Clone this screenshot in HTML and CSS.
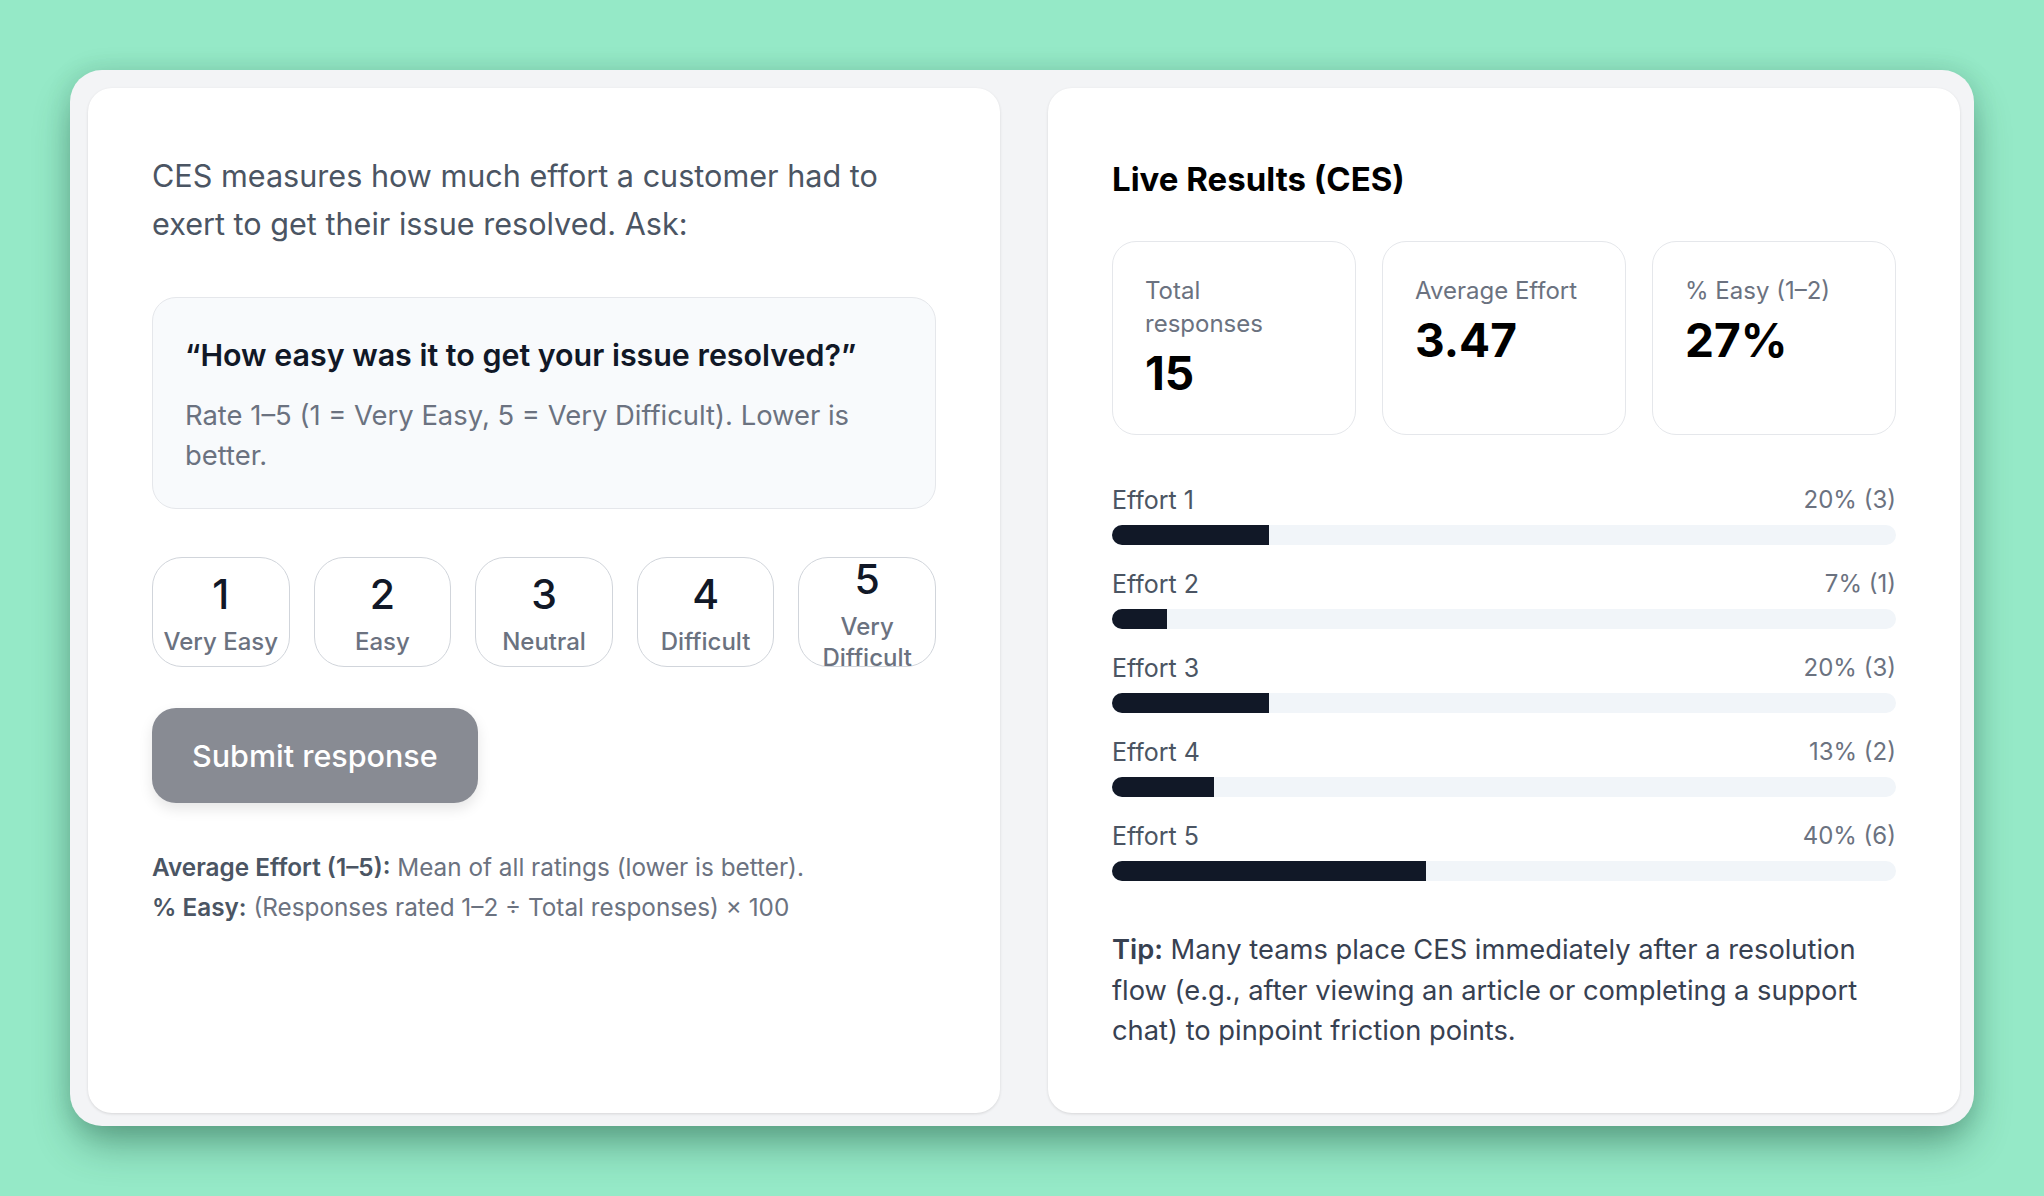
FILE: index.html
```html
<!DOCTYPE html>
<html lang="en">
<head>
  <meta charset="UTF-8" />
  <meta name="viewport" content="width=device-width, initial-scale=1.0" />
  <title>Customer Effort Score</title>
  <link rel="stylesheet" href="styles.css">
</head>
<body>
  <div class="frame">
    <!-- Survey side -->
    <section class="card">
      <p class="intro">CES measures how much effort a customer had to exert to get their issue resolved. Ask:</p>
      <div class="question">
        <div class="question-text">“How easy was it to get your issue resolved?”</div>
        <div class="question-hint">Rate 1–5 (1 = Very Easy, 5 = Very Difficult). Lower is better.</div>
      </div>
      <div class="scale">
        <button class="scale-btn"><span class="num">1</span><span class="lbl">Very Easy</span></button>
        <button class="scale-btn"><span class="num">2</span><span class="lbl">Easy</span></button>
        <button class="scale-btn"><span class="num">3</span><span class="lbl">Neutral</span></button>
        <button class="scale-btn"><span class="num">4</span><span class="lbl">Difficult</span></button>
        <button class="scale-btn"><span class="num">5</span><span class="lbl">Very Difficult</span></button>
      </div>
      <button class="submit" disabled>Submit response</button>
      <div class="notes">
        <p><strong>Average Effort (1–5):</strong> Mean of all ratings (lower is better).</p>
        <p><strong>% Easy:</strong> (Responses rated 1–2 ÷ Total responses) × 100</p>
      </div>
    </section>

    <!-- Results side -->
    <section class="card">
      <h2 class="title">Live Results (CES)</h2>
      <div class="stats">
        <div class="stat">
          <div class="stat-label">Total responses</div>
          <div class="stat-value">15</div>
        </div>
        <div class="stat">
          <div class="stat-label">Average Effort</div>
          <div class="stat-value">3.47</div>
        </div>
        <div class="stat">
          <div class="stat-label">% Easy (1–2)</div>
          <div class="stat-value">27%</div>
        </div>
      </div>
      <div class="dist">
        <div class="row">
          <div class="row-head"><span>Effort 1</span><span class="pct">20% (3)</span></div>
          <div class="track"><div class="fill" style="width: 20%"></div></div>
        </div>
        <div class="row">
          <div class="row-head"><span>Effort 2</span><span class="pct">7% (1)</span></div>
          <div class="track"><div class="fill" style="width: 7%"></div></div>
        </div>
        <div class="row">
          <div class="row-head"><span>Effort 3</span><span class="pct">20% (3)</span></div>
          <div class="track"><div class="fill" style="width: 20%"></div></div>
        </div>
        <div class="row">
          <div class="row-head"><span>Effort 4</span><span class="pct">13% (2)</span></div>
          <div class="track"><div class="fill" style="width: 13%"></div></div>
        </div>
        <div class="row">
          <div class="row-head"><span>Effort 5</span><span class="pct">40% (6)</span></div>
          <div class="track"><div class="fill" style="width: 40%"></div></div>
        </div>
      </div>
      <p class="tip"><strong>Tip:</strong> Many teams place CES immediately after a resolution flow (e.g., after viewing an article or completing a support chat) to pinpoint friction points.</p>
    </section>
  </div>
</body>
</html>
```

FILE: styles.css
```css
* {
  box-sizing: border-box;
}
body {
  margin: 0;
  padding: 70px;
  min-height: 100vh;
  background-color: #95e9c7;
  font-family: Inter, "Noto Sans", sans-serif;
  color: #111827;
}
p {
  margin: 0;
}
.frame {
  display: grid;
  grid-template-columns: 1fr 1fr;
  gap: 48px;
  padding: 18px 14px 13px 18px;
  background: #f3f4f6;
  border-radius: 32px;
  box-shadow: 0 22px 40px -6px rgba(20, 70, 50, 0.45), 0 0 24px rgba(20, 70, 50, 0.15);
}
.card {
  background: #ffffff;
  border-radius: 24px;
  padding: 64px 64px 61px;
  box-shadow: 0 1px 3px rgba(0, 0, 0, 0.12);
}

/* left side */
.intro {
  font-size: 30.6px;
  line-height: 48px;
  color: #4b5563;
}
.question {
  margin-top: 49px;
  padding: 35px 32px 33px;
  background: #f8fafc;
  border: 1.5px solid #e5e7eb;
  border-radius: 24px;
}
.question-text {
  font-size: 30.4px;
  line-height: 44px;
  font-weight: 600;
  color: #111827;
}
.question-hint {
  margin-top: 18px;
  font-size: 27.4px;
  line-height: 40px;
  color: #6b7280;
}
.scale {
  margin-top: 48px;
  display: grid;
  grid-template-columns: repeat(5, 1fr);
  gap: 24px;
}
.scale-btn {
  height: 110px;
  padding: 8px 6px;
  display: flex;
  flex-direction: column;
  align-items: center;
  justify-content: center;
  gap: 4px;
  background: #ffffff;
  border: 1.5px solid #d1d5db;
  border-radius: 30px;
  font-family: inherit;
}
.scale-btn .num {
  font-size: 41px;
  line-height: 55px;
  font-weight: 500;
  color: #111827;
}
.scale-btn .lbl {
  font-size: 24px;
  line-height: 31px;
  font-weight: 500;
  color: #6b7280;
}
.submit {
  margin-top: 41px;
  height: 95px;
  padding: 0 40px;
  border: none;
  border-radius: 24px;
  background: #888b93;
  color: #ffffff;
  font-family: inherit;
  font-size: 30.5px;
  font-weight: 500;
  box-shadow: 0 6px 14px rgba(0, 0, 0, 0.1);
}
.notes {
  margin-top: 44px;
  font-size: 24.3px;
  line-height: 40px;
  color: #6b7280;
}
.notes strong {
  font-weight: 600;
  color: #4b5563;
}

/* right side */
.title {
  margin: 0;
  font-size: 33px;
  line-height: 54px;
  font-weight: 700;
  color: #000000;
}
.stats {
  margin-top: 35px;
  display: grid;
  grid-template-columns: repeat(3, 1fr);
  gap: 26px;
}
.stat {
  padding: 32px 32px 33px;
  border: 1.5px solid #e5e7eb;
  border-radius: 24px;
}
.stat-label {
  font-size: 24px;
  line-height: 33px;
  color: #6b7280;
}
.stat-value {
  margin-top: 5px;
  font-size: 46px;
  line-height: 56px;
  font-weight: 700;
  color: #000000;
}
.dist {
  margin-top: 49px;
  display: flex;
  flex-direction: column;
  gap: 23px;
}
.row-head {
  display: flex;
  justify-content: space-between;
  font-size: 25px;
  line-height: 32px;
  color: #4b5563;
}
.row-head .pct {
  font-size: 24px;
  color: #6b7280;
}
.track {
  margin-top: 9px;
  height: 20px;
  background: #f1f5f9;
  border-radius: 10px;
  overflow: hidden;
}
.fill {
  height: 100%;
  background: #111827;
}
.tip {
  margin-top: 49px;
  font-size: 27.3px;
  line-height: 40.5px;
  color: #374151;
}
.tip strong {
  font-weight: 600;
}
```
